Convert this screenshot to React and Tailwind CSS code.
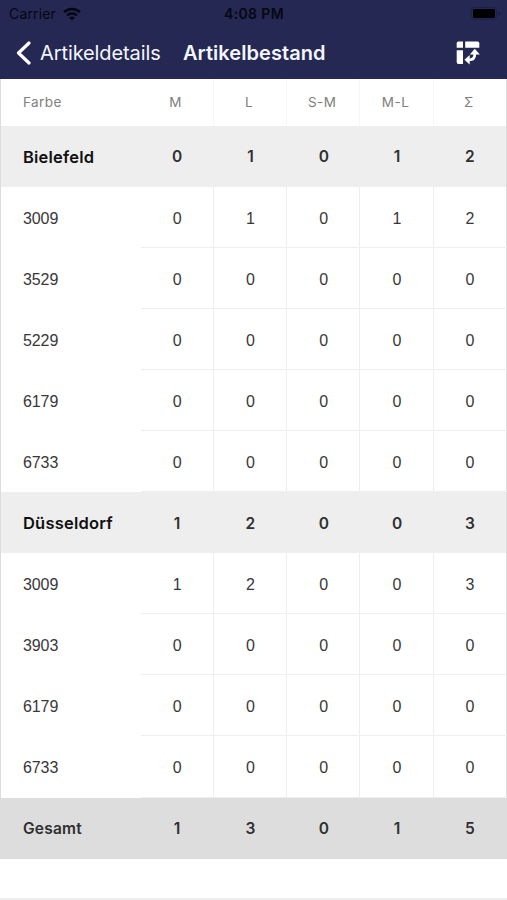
const COLUMNS = ["M", "L", "S-M", "M-L", "Σ"];

const ROWS = [
  { kind: "group", name: "Bielefeld", values: [0, 1, 0, 1, 2] },
  { kind: "item", name: "3009", values: [0, 1, 0, 1, 2] },
  { kind: "item", name: "3529", values: [0, 0, 0, 0, 0] },
  { kind: "item", name: "5229", values: [0, 0, 0, 0, 0] },
  { kind: "item", name: "6179", values: [0, 0, 0, 0, 0] },
  { kind: "item", name: "6733", values: [0, 0, 0, 0, 0] },
  { kind: "group", name: "Düsseldorf", values: [1, 2, 0, 0, 3] },
  { kind: "item", name: "3009", values: [1, 2, 0, 0, 3] },
  { kind: "item", name: "3903", values: [0, 0, 0, 0, 0] },
  { kind: "item", name: "6179", values: [0, 0, 0, 0, 0] },
  { kind: "item", name: "6733", values: [0, 0, 0, 0, 0] },
  { kind: "total", name: "Gesamt", values: [1, 3, 0, 1, 5] },
];

const GRID = "grid grid-cols-[139.5px_repeat(5,73.3px)]";

function StatusBar() {
  return (
    <div className="grid h-[27px] grid-cols-3 items-center pl-[9px] pr-[6px] text-[14px] text-[#050711]">
      <div className="flex items-center gap-[7px]">
        <span className="tracking-[0.15px]">Carrier</span>
        <svg width="18" height="14" viewBox="0 0 18 14" fill="none" stroke="currentColor" strokeWidth="2.5">
          <path d="M1 5.2C5.5 .8 12.5 .8 17 5.2" />
          <path d="M4 8.4c2.8-2.7 7.2-2.7 10 0" />
          <path d="M6.2 10.7c1.6-1.5 4-1.5 5.6 0L9 13.5Z" fill="currentColor" stroke="none" />
        </svg>
      </div>
      <span className="whitespace-nowrap pr-[2px] text-center text-[14px] font-semibold tracking-[0.35px]">4:08 PM</span>
      <svg className="justify-self-end" width="30" height="13" viewBox="0 0 30 13" fill="none">
        <rect x=".5" y=".5" width="25" height="12" rx="3" stroke="#1d2046" />
        <rect x="2" y="2" width="22" height="9" rx="1.5" fill="#000" />
        <path d="M27.5 4.5c2 .7 2 3.3 0 4Z" fill="#191c3d" />
      </svg>
    </div>
  );
}

function PivotIcon() {
  return (
    <svg width="24" height="24" viewBox="0 0 24 24" fill="#fff">
      <path d="M2.500 .5h4.500V6.800H.7V2.300q0-1.800 1.800-1.800Z" />
      <path d="M9.200 .5h12.300q1.800 0 1.800 1.800v4.500H9.200Z" />
      <path d="M.7 9.200h6.300v13.800H2.500q-1.800 0-1.800-1.800Z" />
      <path d="M18.800 12v1.500c0 3.500-1.600 5.300-6 5.300" fill="none" stroke="#fff" strokeWidth="2.800" />
      <path d="m18.800 7.800 5 5.600H13.800Z" />
      <path d="m8.400 18.800 5.300-4.800v9.600Z" />
    </svg>
  );
}

function NavBar() {
  return (
    <nav className="flex h-[52px] items-center pb-[1px] pl-[15px] pr-[27px] text-[20px] text-[#f4f6ff]">
      <svg width="17" height="24" viewBox="0 0 17 24" fill="none" stroke="#fff" strokeWidth="3.2" strokeLinecap="round" strokeLinejoin="round">
        <path d="M14 2 3.500 12 14 22" />
      </svg>
      <span className="ml-[8px] w-[143px] whitespace-nowrap tracking-[-0.1px]">Artikeldetails</span>
      <h1 className="whitespace-nowrap font-semibold tracking-[0.05px]">Artikelbestand</h1>
      <div className="ml-auto">
        <PivotIcon />
      </div>
    </nav>
  );
}

function HeaderRow() {
  return (
    <div className={`${GRID} h-[47px] text-[13.5px] text-[#808080]`}>
      <div className="flex items-center pl-[22px] tracking-[0.4px]">Farbe</div>
      {COLUMNS.map((label) => (
        <div key={label} className="flex items-center justify-center border-r border-[#f6f6f6] pr-[2px] tracking-[0.5px] last:border-r-0 last:pr-[3px]">
          {label}
        </div>
      ))}
    </div>
  );
}

function SummaryRow({ row }) {
  const total = row.kind === "total";
  return (
    <div className={`${GRID} h-[61.05px] text-[15.5px] font-semibold text-[#303030] ${total ? "bg-[#dddddd]" : "bg-[#eeeeee]"}`}>
      <div className={`flex items-center pl-[22px] pt-px ${total ? "tracking-[0.2px]" : "text-[16.5px] tracking-[0.2px] text-[#111111]"}`}>{row.name}</div>
      {row.values.map((value, i) => (
        <div key={i} className="flex items-center justify-center pt-px last:pr-px">{value}</div>
      ))}
    </div>
  );
}

function ItemRow({ row }) {
  return (
    <div className={`${GRID} h-[61.05px] font-['Liberation_Sans',Arial,sans-serif] text-[16px] text-[#383838]`}>
      <div className="flex items-center pl-[22px] pt-[2px] tracking-[-0.1px]">{row.name}</div>
      {row.values.map((value, i) => (
        <div key={i} className="flex items-center justify-center border-b border-r border-[#eeeeee] pl-px pt-[3px] last:border-r-0 last:pl-0 last:pr-px">
          {value}
        </div>
      ))}
    </div>
  );
}

export default function App() {
  return (
    <div className="flex h-[900px] w-[507px] flex-col overflow-hidden bg-white font-['Inter',sans-serif]">
      <header className="h-[79px] shrink-0 bg-[#252852]">
        <StatusBar />
        <NavBar />
      </header>
      <main className="border-x border-[#dcdcdc]">
        <HeaderRow />
        {ROWS.map((row, i) =>
          row.kind === "item" ? <ItemRow key={i} row={row} /> : <SummaryRow key={i} row={row} />
        )}
      </main>
      <footer className="mt-auto h-[2px] bg-[#eeeeee]" />
    </div>
  );
}
